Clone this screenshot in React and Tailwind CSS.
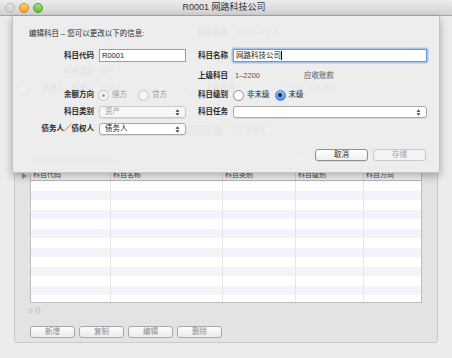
import React from 'react';

const FONT = { fontFamily: '"Liberation Sans", "Noto Sans CJK SC", sans-serif' };

const Arrows = () => (
  <svg width="5" height="7" viewBox="0 0 5 7" className="shrink-0">
    <path d="M2.5 0.5 L4.5 2.8 L0.5 2.8 Z M2.5 6.5 L4.5 4.2 L0.5 4.2 Z" fill="#333" />
  </svg>
);

const Select = ({ value, disabled, className = '' }) => (
  <div
    className={`flex items-center justify-between h-[12px] rounded-[3px] border px-[5px] ${
      disabled ? 'border-[#c9c9c9] bg-[#f7f7f7] text-[#9a9a9a]' : 'border-[#a9a9a9] bg-white text-[#222]'
    } shadow-[0_1px_0_rgba(0,0,0,0.08)] ${className}`}
  >
    <span className="text-[7.5px] leading-none">{value}</span>
    <Arrows />
  </div>
);

const Radio = ({ checked, disabled, label }) => (
  <div className="flex items-center">
    {checked && !disabled ? (
      <div className="w-[11px] h-[11px] rounded-full border border-[#3d7fd8] bg-gradient-to-b from-[#9cc5f5] to-[#4b8ee3] flex items-center justify-center">
        <div className="w-[4px] h-[4px] rounded-full bg-[#1b2a3c]" />
      </div>
    ) : (
      <div
        className={`w-[11px] h-[11px] rounded-full border flex items-center justify-center ${
          disabled ? 'border-[#c4c4c4] bg-[#f5f5f5]' : 'border-[#8a8a8a] bg-white'
        }`}
      >
        {checked && <div className="w-[3px] h-[3px] rounded-full bg-[#a0a0a0]" />}
      </div>
    )}
    <span className={`ml-[3px] text-[7.5px] leading-none ${disabled ? 'text-[#9a9a9a]' : 'text-[#222]'}`}>{label}</span>
  </div>
);

const Label = ({ children, className = '' }) => (
  <div className={`text-[7.5px] leading-none font-bold text-[#2a2a2a] ${className}`}>{children}</div>
);

const SmallButton = ({ children }) => (
  <div className="w-[45px] h-[12px] rounded-[3px] border border-[#a8a8a8] text-[#8a8a8a] bg-gradient-to-b from-[#fbfbfb] to-[#ececec] flex items-center justify-center text-[7.5px] leading-none">
    {children}
  </div>
);

export default function App() {
  const rows = Array.from({ length: 13 });
  const cols = ['w-[80px]', 'w-[112px]', 'w-[73px]', 'w-[68px]', 'flex-1'];
  const heads = ['科目代码', '科目名称', '科目类别', '科目级别', '科目方向'];

  return (
    <div className="relative w-[452px] h-[358px] overflow-hidden bg-[#ececec]" style={FONT}>
      {/* title bar */}
      <div className="relative h-[16px] flex items-center border-b border-[#a9a9a9] bg-gradient-to-b from-[#ececec] to-[#d2d2d2]">
        <div className="flex items-center gap-[4px] pl-[5px]">
          <div className="w-[10px] h-[10px] rounded-full border border-[#b5b5b5] bg-gradient-to-b from-[#e6e6e6] to-[#cfcfcf]" />
          <div className="w-[10px] h-[10px] rounded-full border border-[#d08a1a] bg-gradient-to-b from-[#ffd36a] to-[#f2a223]" />
          <div className="w-[10px] h-[10px] rounded-full border border-[#4e9a2a] bg-gradient-to-b from-[#a8e67a] to-[#5dbb36]" />
        </div>
        <div className="flex-1 text-center text-[9px] text-[#333] pr-[47px]">R0001 网路科技公司</div>
      </div>

      {/* window body behind the sheet */}
      <div className="px-[14px] text-[#333]">
        <div className="h-[114px] pt-[11px]">
          <div className="flex items-center h-[12px] pl-[183px]">
            <span className="text-[7.5px] leading-none font-bold w-[35px]">科目名称</span>
            <div className="w-[196px] h-[12px] border border-[#cfcfcf] bg-white text-[7.5px] leading-[10px] pl-[2px]">网路科技公司</div>
          </div>
          <div className="flex items-center h-[10px] mt-[28px] pl-[50px] text-[7.5px] leading-none">
            <span className="font-bold">科目类别</span>
            <span className="ml-[6px]">资产</span>
          </div>
          <div className="flex items-center h-[14px] mt-[5px] text-[7.5px] leading-none">
            <div className="w-[13px] h-[13px] rounded-full border border-[#999] bg-white ml-[2px]" />
            <span className="ml-[13px] font-bold">债务人／债权人</span>
            <span className="ml-[5px]">债务人</span>
            <div className="w-[12px] h-[12px] rounded-full border border-[#999] bg-white ml-[64px]" />
            <span className="ml-[7px] font-bold">上级科目</span>
            <span className="ml-[44px]">1–2200</span>
            <span className="ml-[3px]">应收账款</span>
          </div>
        </div>

        {/* group box */}
        <div className="relative h-[213px] rounded-[3px] border border-[#cbcbcb] bg-[#e3e3e3]">
          <div className="absolute -top-[6px] left-[165px] flex h-[11px] rounded-[3px] border border-[#bdbdbd] overflow-hidden text-[7px] leading-none">
            <div className="w-[42px] bg-[#7a7a7a] text-white flex items-center justify-center">科目设置</div>
            <div className="w-[50px] bg-white flex items-center justify-center">科目余额表</div>
          </div>
          <div className="flex items-center justify-between h-[13px] mt-[23px] pl-[13px] pr-[12px]">
            <span className="text-[7px] leading-none text-[#999]">20060605/00:54:25/6956429</span>
            <div className="w-[132px] h-[12px] rounded-full border border-[#bbb] bg-white" />
          </div>
          <div className="relative ml-[15px] mr-[15px] mt-[2px] border border-[#bdbdbd] bg-white">
            <div className="absolute -left-[9px] top-[3px] w-0 h-0 border-y-[3.5px] border-y-transparent border-l-[5px] border-l-[#8c8c8c]" />
            <div className="flex h-[11px] border-b border-[#b8b8b8] bg-gradient-to-b from-white to-[#efefef]">
              {heads.map((h, i) => (
                <div key={h} className={`${cols[i]} text-[7px] leading-[10px] pl-[2px] text-[#444] ${i < 4 ? 'border-r border-[#d6d6d6]' : ''}`}>
                  {h}
                </div>
              ))}
            </div>
            <div className="h-[121px] overflow-hidden">
              {rows.map((_, r) => (
                <div key={r} className={`flex h-[9.5px] ${r % 2 ? 'bg-[#f1f4f9]' : 'bg-white'}`}>
                  {cols.map((c, i) => (
                    <div key={i} className={`${c} ${i < 4 ? 'border-r border-[#e6e6e6]' : ''}`} />
                  ))}
                </div>
              ))}
            </div>
          </div>
          <div className="pl-[14px] mt-[3px] text-[6.5px] text-[#b3b3b3] h-[10px] leading-[10px]">0 行</div>
          <div className="flex gap-[4px] pl-[15px] mt-[10px]">
            <SmallButton>新增</SmallButton>
            <SmallButton>复制</SmallButton>
            <SmallButton>编辑</SmallButton>
            <SmallButton>删除</SmallButton>
          </div>
        </div>
      </div>

      {/* sheet */}
      <div className="absolute left-[12px] top-[16px] w-[428px] h-[157px] bg-[rgba(237,237,237,0.95)] border-x border-b border-[#c4c4c4] shadow-[0_3px_8px_rgba(0,0,0,0.3)]">
        <div className="pt-[13px] pl-[16px] h-[23px] text-[7.5px] leading-[10px] text-[#2a2a2a]">
          编辑科目 – 您可以更改以下的信息:
        </div>

        <div className="flex items-center h-[13px] mt-[10px] pl-[8px]">
          <Label className="w-[73px] text-right">科目代码</Label>
          <div className="ml-[5px] w-[87px] h-[13px] border border-[#9c9c9c] bg-white flex items-center px-[2px] text-[7.5px] text-[#222]">R0001</div>
          <Label className="ml-[12px] w-[30px]">科目名称</Label>
          <div className="ml-[5px] w-[194px] h-[13px] border border-[#5f9be3] shadow-[0_0_0_1.5px_rgba(110,160,230,0.55)] rounded-[1px] bg-white flex items-center px-[2px] text-[7.5px] text-[#222]">
            网路科技公司<span className="inline-block w-px h-[9px] bg-black" />
          </div>
        </div>

        <div className="flex items-center h-[12px] mt-[8px] pl-[8px]">
          <div className="w-[73px]" />
          <div className="ml-[5px] w-[87px]" />
          <Label className="ml-[12px] w-[30px]">上级科目</Label>
          <div className="ml-[7px] text-[7.5px] leading-none text-[#555] w-[69px]">1–2200</div>
          <div className="text-[7.5px] leading-none text-[#555]">应收账款</div>
        </div>

        <div className="flex items-center h-[12px] mt-[7px] pl-[8px]">
          <Label className="w-[73px] text-right">余额方向</Label>
          <div className="ml-[4px] w-[88px] flex items-center gap-[11px]">
            <Radio checked disabled label="借方" />
            <Radio disabled label="贷方" />
          </div>
          <Label className="ml-[12px] w-[30px]">科目级别</Label>
          <div className="ml-[5px] flex items-center gap-[5px]">
            <Radio label="非末级" />
            <Radio checked label="末级" />
          </div>
        </div>

        <div className="flex items-center h-[12px] mt-[5px] pl-[8px]">
          <Label className="w-[73px] text-right">科目类别</Label>
          <Select value="资产" disabled className="ml-[5px] w-[87px]" />
          <Label className="ml-[12px] w-[30px]">科目任务</Label>
          <Select value="" className="ml-[5px] w-[194px]" />
        </div>

        <div className="flex items-center h-[12px] mt-[5px] pl-[8px]">
          <Label className="w-[73px] text-right">债务人／债权人</Label>
          <Select value="债务人" className="ml-[5px] w-[87px]" />
        </div>

        <div className="flex justify-end gap-[5px] mt-[14px] pr-[13px]">
          <div className="w-[53px] h-[12px] rounded-[3px] border border-[#8f8f8f] bg-gradient-to-b from-white to-[#efefef] shadow-[0_1px_0_rgba(0,0,0,0.08)] flex items-center justify-center text-[7.5px] leading-none text-[#222]">
            取消
          </div>
          <div className="w-[53px] h-[12px] rounded-[3px] border border-[#c8c8c8] bg-[#f3f3f3] flex items-center justify-center text-[7.5px] leading-none text-[#a5a5a5]">
            存储
          </div>
        </div>
      </div>
    </div>
  );
}
